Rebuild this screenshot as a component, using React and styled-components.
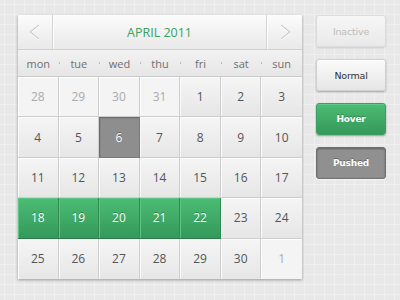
import React from 'react';
import styled, { createGlobalStyle, css } from 'styled-components';

const Global = createGlobalStyle`
    html, body {
        margin:0;
        padding:0;
    }
    body {
        width:400px;
        height:300px;
        overflow:hidden;
        font-family:"Open Sans", "DejaVu Sans", sans-serif;
        background-color:#e8e8e8;
        background-image:
            linear-gradient(to right, #efefef 1px, transparent 1px),
            linear-gradient(to bottom, #efefef 1px, transparent 1px);
        background-size:10px 10px;
        background-position:4px 4px;
    }
`

const Page = styled.div`
    display:flex;
    align-items:flex-start;
    gap:14px;
    padding:15px 0 0 18px;
`

const Calendar = styled.div`
    width:284px;
    background:#f2f2f2;
    box-shadow:0 1px 3px rgba(0,0,0,0.35);
`

const Header = styled.div`
    display:flex;
    height:35px;
    background:linear-gradient(#fcfcfc, #f1f1f1 55%, #e9e9e9);
    border-bottom:1px solid #d0d0d0;
    box-sizing:border-box;
`

const NavButton = styled.div`
    flex:0 0 ${props=>props.w}px;
    display:flex;
    align-items:center;
    justify-content:center;
    box-sizing:border-box;
    ${props=>props.side==='left' ? css`
        border-right:1px solid #d4d4d4;
        box-shadow:1px 0 0 #fff;
    ` : css`
        border-left:1px solid #d4d4d4;
        box-shadow:inset 1px 0 0 #fff;
    `}
`

const Title = styled.div`
    flex:1;
    display:flex;
    align-items:center;
    justify-content:center;
    color:#38a25e;
    font-size:12.5px;
    padding-top:1px;
`

const DayNames = styled.div`
    display:grid;
    grid-template-columns:repeat(7, 1fr);
    height:27px;
    background:linear-gradient(#f2f2f2, #e6e6e6);
    border-bottom:1px solid #cacaca;
    box-sizing:border-box;
`

const DayName = styled.div`
    position:relative;
    display:flex;
    align-items:center;
    justify-content:center;
    color:#6f6f6f;
    font-size:11px;
    &::after {
        content:${props=>props.last ? 'none' : "''"};
        position:absolute;
        right:-1px;
        top:12px;
        width:1px;
        height:2px;
        background:#bdbdbd;
    }
`

const Grid = styled.div`
    display:grid;
    grid-template-columns:repeat(7, 1fr);
    grid-template-rows:repeat(5, 1fr);
    height:202px;
`

const Cell = styled.div`
    display:flex;
    align-items:center;
    justify-content:center;
    font-size:12px;
    color:#555;
    box-sizing:border-box;
    border-right:1px solid #cdcdcd;
    border-bottom:1px solid #cdcdcd;
    background:linear-gradient(#f5f5f5, #e6e6e6);
    box-shadow:inset 1px 1px 0 #fbfbfb;
    &:nth-child(7n) { border-right:none; }
    &:nth-last-child(-n+7) { border-bottom:none; }

    ${props=>props.muted && css`
        color:#ababab;
        background:#f4f4f4;
        box-shadow:inset 1px 1px 0 #fff;
    `}
    ${props=>props.selected && css`
        color:#fff;
        background:#8e8e8e;
        border-color:#777;
        box-shadow:inset 1px 1px 0 #6e6e6e, inset 2px 2px 0 #848484;
        text-shadow:0 -1px 0 #666;
    `}
    ${props=>props.range && css`
        color:#fff;
        background:linear-gradient(#4cbc74, #34995a);
        border-right-color:#2f8a50;
        border-bottom:1px solid #2b7a47;
        box-shadow:inset 1px 1px 0 #5dc684;
        text-shadow:0 -1px 0 #2e8a50;
    `}
`

const Side = styled.div`
    display:flex;
    flex-direction:column;
    gap:12px;
`

const Button = styled.div`
    width:70px;
    height:32px;
    box-sizing:border-box;
    border-radius:3px;
    display:flex;
    align-items:center;
    justify-content:center;
    font-family:"DejaVu Sans", sans-serif;
    font-size:9.5px;
    letter-spacing:-0.2px;
    ${props=>props.kind==='inactive' && css`
        color:#bdbdbd;
        background:linear-gradient(#f6f6f6, #e9e9e9);
        border:1px solid #dcdcdc;
        box-shadow:0 1px 2px rgba(0,0,0,0.12);
    `}
    ${props=>props.kind==='normal' && css`
        color:#333;
        background:linear-gradient(#fafafa, #e6e6e6);
        border:1px solid #d0d0d0;
        box-shadow:0 1px 2px rgba(0,0,0,0.3), inset 0 1px 0 #fff;
    `}
    ${props=>props.kind==='hover' && css`
        color:#fff;
        background:linear-gradient(#4cbc74, #35995a);
        border:1px solid #3a9f60;
        box-shadow:0 1px 2px rgba(0,0,0,0.35), inset 0 1px 0 #62c988;
        text-shadow:0 -1px 0 #2e8a50;
        font-size:9px;
        font-weight:bold;
    `}
    ${props=>props.kind==='pushed' && css`
        color:#fff;
        background:#909090;
        border:1px solid #6f6f6f;
        box-shadow:inset 0 1px 2px rgba(0,0,0,0.35), 0 1px 0 rgba(255,255,255,0.6);
        text-shadow:0 -1px 0 #666;
        font-size:9px;
        font-weight:bold;
    `}
`

const Chevron = ({dir}) => {
    const pts = dir==='left' ? '11,1 2,8 11,15' : '3,1 12,8 3,15';
    return (
        <svg width="14" height="17" viewBox="0 0 14 17">
            <polyline points={pts} fill="none" stroke="#fff" strokeWidth="1.5" transform="translate(0,1)"/>
            <polyline points={pts} fill="none" stroke="#cdcdcd" strokeWidth="1.2"/>
        </svg>
    );
};

const names = ['mon','tue','wed','thu','fri','sat','sun'];

const days = [
    {n:28, muted:true},{n:29, muted:true},{n:30, muted:true},{n:31, muted:true},
    ...Array.from({length:30}, (_, i) => ({n:i+1})),
    {n:1, muted:true},
].map(d => ({
    ...d,
    selected: !d.muted && d.n===6,
    range: !d.muted && d.n>=18 && d.n<=22,
}));

const App = () => (
    <>
        <Global/>
        <Page>
            <Calendar>
                <Header>
                    <NavButton side="left" w={35}><Chevron dir="left"/></NavButton>
                    <Title>APRIL 2011</Title>
                    <NavButton side="right" w={36}><Chevron dir="right"/></NavButton>
                </Header>
                <DayNames>
                    {names.map((n, i) => <DayName key={n} last={i===6}>{n}</DayName>)}
                </DayNames>
                <Grid>
                    {days.map((d, i) => (
                        <Cell key={i} muted={d.muted} selected={d.selected} range={d.range}>{d.n}</Cell>
                    ))}
                </Grid>
            </Calendar>
            <Side>
                <Button kind="inactive">Inactive</Button>
                <Button kind="normal">Normal</Button>
                <Button kind="hover">Hover</Button>
                <Button kind="pushed">Pushed</Button>
            </Side>
        </Page>
    </>
);

export default App;
